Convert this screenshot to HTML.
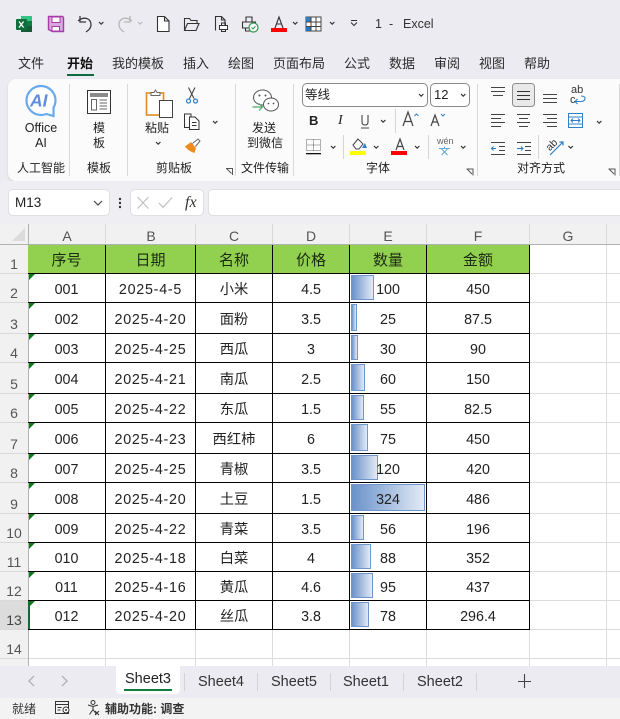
<!DOCTYPE html>
<html lang="zh"><head><meta charset="utf-8"><title>Excel</title>
<style>
*{box-sizing:border-box}
html,body{margin:0;padding:0}
body{width:620px;height:719px;overflow:hidden;position:relative;background:#ecebf1;font-family:"Liberation Sans","Noto Sans CJK SC",sans-serif;color:#1f1f1f}
.a{position:absolute}
.t{position:absolute;white-space:nowrap;line-height:16px;font-size:12px;color:#222}
.c{transform:translateX(-50%);text-align:center}
svg{position:absolute;overflow:visible;fill:none}
.tab{font-size:13px;top:56px;color:#2b2b2b}
.v{position:absolute;top:84px;width:1px;height:92px;background:#d8d8d8}
.vs{position:absolute;width:1px;background:#d3d3d3}
.rh{position:absolute;left:0;width:28px;text-align:center;font-size:14px;line-height:16px;color:#555}
.ch{position:absolute;top:228px;font-size:14px;line-height:16px;color:#555;transform:translateX(-50%)}
.hl{position:absolute;left:0;width:28px;height:1px;background:#d9d9d9}
.hv{position:absolute;top:224px;height:20px;width:1px;background:#d9d9d9}
table{position:absolute;left:28px;top:245px;border-collapse:separate;border-spacing:0;table-layout:fixed;width:502px}
td{padding:4px 0 0;border-right:1px solid #000;border-bottom:1px solid #000;text-align:center;font-size:14.3px;color:#222;position:relative;white-space:nowrap;overflow:visible;line-height:16px}
tr.h td{background:#92d050;font-size:15px;color:#1c2a10}
.g{position:absolute;left:1px;top:0;width:0;height:0;border-top:6px solid #0a7a16;border-right:6px solid transparent}
.b{position:absolute;left:1px;top:1px;bottom:2px;border:1px solid #7097cc;background:linear-gradient(90deg,#6a92ca,#e2eaf5)}
.n{position:relative}
.d{letter-spacing:.75px}
.sn{position:absolute;top:674px;font-size:14.5px;line-height:17px;color:#333;white-space:nowrap;transform:translateX(-50%)}
.gl{position:absolute;background:#dcdcdc}
</style></head><body>

<!-- title bar icons -->
<svg style="left:0;top:0" width="400" height="50" viewBox="0 0 400 50">
<path d="M21 16h11v16h-11z" fill="#107c41"/><path d="M21 16h11v5h-11z" fill="#33c481"/><path d="M21 26h11v6h-11z" fill="#185c37"/><rect x="16" y="19" width="11" height="11" rx="1" fill="#0f6f3c"/>
<path d="M19 21.5l4.6 6M23.6 21.500l-4.600 6" stroke="#fff" stroke-width="1.300"/>
<path d="M48.500 16.500h14l1 1v14h-11l-4-2z" fill="#d9a8dc" stroke="#a93aa8" stroke-width="1.400"/>
<rect x="52" y="17" width="8" height="5.500" fill="#fff" stroke="#a93aa8"/><rect x="52" y="26.500" width="7.500" height="4.500" fill="#fff" stroke="#a93aa8"/>
<path d="M80 16v6h6M78 21c6-5 13-3 13 4 0 3-2 5-5 7" stroke="#3a3a3a" stroke-width="1.300"/>
<path d="M99 22l2.200 2.200 2.200-2.200" stroke="#333" stroke-width="1.200"/>
<path d="M130 16v6h-6M132 21c-6-5-13-3-13 4 0 3 2 5 5 7" stroke="#b5b5b5" stroke-width="1.300"/>
<path d="M138 22l2.200 2.200 2.200-2.200" stroke="#bbb" stroke-width="1.200"/>
<path d="M157.500 16.500h7l4.500 4.500v10.500h-11.500zM164.500 16.500v4.500h4.500" stroke="#333" stroke-width="1.100" fill="#fff"/>
<path d="M184.500 30.500v-12h5l1.500 2h6v3M184.500 30.500h11.500l3-7h-11.500z" stroke="#333" stroke-width="1.100"/>
<path d="M215.500 30.500v-14h6l3.500 3.500v5M221.500 16.500v3.500h3.500" stroke="#333" stroke-width="1.100"/><rect x="219.500" y="25.500" width="8" height="4" fill="#fff" stroke="#333"/><rect x="221.500" y="23" width="4" height="2.500" stroke="#333"/><rect x="221.500" y="29.500" width="4" height="2" stroke="#333"/>
<path d="M246 17h6v5h-6zM242.500 22h13v6h-13zM245.500 28h6v3h-6z" stroke="#333" stroke-width="1.100"/>
<circle cx="253.500" cy="27.500" r="4.500" fill="#fff" stroke="#3a9a5a" stroke-width="1.300"/><path d="M251.500 27.500l1.500 1.500 2.500-2.800" stroke="#3a9a5a" stroke-width="1.100"/>
<path d="M275 28l4-11 4 11M276.500 24h5" stroke="#333" stroke-width="1.100"/><rect x="271" y="28" width="16" height="4" fill="#f00"/>
<path d="M293 22l2.200 2.200 2.200-2.200" stroke="#333" stroke-width="1.200"/>
<rect x="306" y="17" width="15" height="14" fill="#fff" stroke="#444"/><rect x="306" y="17" width="5" height="5" fill="#2f80c8"/><rect x="306" y="26" width="5" height="5" fill="#1f78c8"/><path d="M311 17v14M316 17v14M306 22h15M306 26.500h15" stroke="#444"/>
<path d="M330 22l2.200 2.200 2.200-2.200" stroke="#333" stroke-width="1.200"/>
<path d="M351 20.500h6M351 22.500l3 3 3-3" stroke="#333" stroke-width="1"/>
</svg>
<div class="t" style="left:375px;top:16px;font-size:12.500px;color:#333">1</div>
<div class="t" style="left:389px;top:16px;font-size:12.500px;color:#333">-</div>
<div class="t" style="left:403px;top:16px;font-size:12.500px;color:#333">Excel</div>

<!-- tabs -->
<div class="t tab" style="left:18px">文件</div>
<div class="t tab" style="left:67px;font-weight:700;color:#111">开始</div>
<div class="a" style="left:67px;top:74px;width:27px;height:2px;background:#0f6b3b"></div>
<div class="t tab" style="left:112px">我的模板</div>
<div class="t tab" style="left:183px">插入</div>
<div class="t tab" style="left:228px">绘图</div>
<div class="t tab" style="left:273px">页面布局</div>
<div class="t tab" style="left:344px">公式</div>
<div class="t tab" style="left:389px">数据</div>
<div class="t tab" style="left:434px">审阅</div>
<div class="t tab" style="left:479px">视图</div>
<div class="t tab" style="left:524px">帮助</div>

<!-- ribbon -->
<div class="a" style="left:8px;top:79px;width:620px;height:102px;background:#fbfbfb;border-radius:8px;box-shadow:0 1px 2px #cfcfd4"></div>
<div class="v" style="left:69px"></div><div class="v" style="left:127px"></div><div class="v" style="left:235px"></div><div class="v" style="left:293px"></div><div class="v" style="left:477px"></div><div class="v" style="left:619px"></div>

<svg style="left:0;top:0" width="620" height="182" viewBox="0 0 620 182">
<!-- AI -->
<path d="M41 86c7.500 0 14.500 6 14.500 14.500 0 2.500-.7 5-2 7v8.500l-7-2c-1.700.6-3.500 1-5.500 1-8 0-14.500-6.500-14.500-14.500s6.500-14.500 14.500-14.500z" stroke="#6aa9ee" stroke-width="2.200" fill="#fff"/>
<text x="30" y="106.500" font-family="Liberation Sans" font-style="italic" font-weight="700" font-size="17.500" fill="#5f8fdc">AI</text>
<!-- template -->
<rect x="87.500" y="90.500" width="23" height="23" stroke="#333" fill="#fff"/><rect x="90" y="93" width="18" height="4" fill="#8a8a8a"/><rect x="91.500" y="99.500" width="5" height="10.500" stroke="#666"/><path d="M99.500 100h7.500M99.500 103h7.500M99.500 106h7.500M99.500 109h7.500" stroke="#666"/>
<!-- paste -->
<rect x="146.500" y="93" width="17" height="22" stroke="#e08a24" stroke-width="1.600" fill="#fff"/>
<path d="M151 92.500h3l1.500-2.500 1.500 2.500h3v3h-9z" stroke="#666" fill="#fff"/>
<rect x="159.500" y="100.500" width="13" height="17" fill="#fff" stroke="#444"/>
<!-- scissors -->
<path d="M188.500 87.500l5.500 11M195 87.500l-5.500 11" stroke="#444" stroke-width="1.100"/><circle cx="188.500" cy="101" r="2" stroke="#2f80c8" stroke-width="1.200"/><circle cx="195.500" cy="101" r="2" stroke="#2f80c8" stroke-width="1.200"/>
<!-- copy -->
<path d="M189 127.500h-4.500v-13.500h6.500v3" stroke="#333"/><path d="M189.500 117h5.500l4 4v8.500h-9.500zM192 122.500h4.500M192 125.500h4.500" stroke="#333"/>
<path d="M213 121l2.200 2.200 2.200-2.200" stroke="#333" stroke-width="1.200"/>
<path d="M156 142l2.200 2.200 2.200-2.200" stroke="#333" stroke-width="1.200"/>
<!-- brush -->
<path d="M185 146.500l6-4.500 5 6-1.500 5c-3.500-1-7.500-3.500-9.500-6.500z" fill="#ee8a1e"/><path d="M192.500 143.500l5.500-4.500 2 2-4.500 5.500" stroke="#666" fill="#fff"/>
<path d="M226 168.500h6.500v6.500M226.500 168.500l5 5" stroke="#555"/>
<!-- wechat -->
<ellipse cx="262.500" cy="97.500" rx="9" ry="7.500" stroke="#555" fill="#fff"/><circle cx="259.500" cy="95.500" r="1" fill="#555"/><circle cx="265.500" cy="95.500" r="1" fill="#555"/>
<ellipse cx="271" cy="104.500" rx="7.500" ry="6.500" stroke="#555" fill="#fff"/><circle cx="268.500" cy="103.500" r=".9" fill="#555"/><circle cx="273.500" cy="103.500" r=".9" fill="#555"/>
<path d="M252.500 107h10M259 103.500l3.500 3.500-3.500 3.500" stroke="#4aa86a" stroke-width="1.200"/>
<!-- font row 2 -->
<path d="M362 115v7c0 2 1 3 3 3s3-1 3-3v-7M361 128h8" stroke="#444" stroke-width="1.100"/>
<path d="M381 120l2.200 2.200 2.200-2.200" stroke="#333" stroke-width="1.200"/>
<rect x="395" y="109" width="1" height="24" fill="#d5d5d5"/>
<path d="M403 126l5-14 5 14M405 121.500h6" stroke="#444" stroke-width="1.200"/><path d="M414.500 116l2-2 2 2" stroke="#2f80c8" stroke-width="1"/>
<path d="M431 126l4-11 4 11M432.500 122h5" stroke="#444" stroke-width="1.200"/><path d="M441 114l2 2 2-2" stroke="#2f80c8" stroke-width="1"/>
<!-- font row 3 -->
<path d="M306.500 139.500h14v11h-14zM306.500 145h14M313.500 139.500v11" stroke="#666" stroke-dasharray="1 1"/><rect x="306" y="153" width="15" height="1.300" fill="#111"/>
<path d="M331 146l2.200 2.200 2.200-2.200" stroke="#333" stroke-width="1.200"/>
<rect x="343" y="135" width="1" height="24" fill="#d5d5d5"/>
<path d="M353 145l5-6 5 5-4 5h-3z" stroke="#444"/><path d="M362 148l3-5 2 5z" fill="#2f80c8"/><rect x="350" y="151" width="16" height="4" fill="#ff0"/>
<path d="M374 146l2.200 2.200 2.200-2.200" stroke="#333" stroke-width="1.200"/>
<path d="M396 150l4-11 4 11M397.500 146.500h5" stroke="#444" stroke-width="1.200"/><rect x="391" y="151" width="16" height="4" fill="#f00"/>
<path d="M415 146l2.200 2.200 2.200-2.200" stroke="#333" stroke-width="1.200"/>
<rect x="428" y="135" width="1" height="24" fill="#d5d5d5"/>
<path d="M439 148.500h11M444.500 146.500v2M441.500 149l6 6M447.500 149l-6 6" stroke="#5fa8d8"/>
<path d="M461 146l2.200 2.200 2.200-2.200" stroke="#333" stroke-width="1.200"/>
<path d="M466.500 169h6.500v6.500M467 169l5 5" stroke="#555"/>
<!-- align top -->
<path d="M491 87.500h14M491 91.500h14M493 95.500h10" stroke="#444"/>
<rect x="512.500" y="83.500" width="22" height="23" rx="3" fill="#e9e9e9" stroke="#8e8e8e"/>
<path d="M517 91.500h13M517 95.500h13M517 99.500h13" stroke="#333"/>
<path d="M543 94.500h14M543 98.500h14M543 102.500h14" stroke="#444"/>
<path d="M581 96c3 0 4 1 4 2.500s-1.500 3-4 3h-6M577.500 99l-2.500 2.500 2.500 2.500" stroke="#2f80c8" stroke-width="1.100"/>
<text x="571" y="93" font-family="Liberation Sans" font-size="11" fill="#333">ab</text><text x="570" y="103" font-family="Liberation Sans" font-size="11" fill="#333">c</text>
<!-- align row 2 -->
<path d="M491 114.500h14M491 118.500h10M491 122.500h14M491 126.500h10" stroke="#444"/>
<path d="M517 114.500h13M519 118.500h9M517 122.500h13M519 126.500h9" stroke="#444"/>
<path d="M543 114.500h14M547 118.500h10M543 122.500h14M547 126.500h10" stroke="#444"/>
<rect x="568.500" y="113.500" width="14" height="14" stroke="#2f80c8" fill="#fff"/><path d="M568.500 117h14M568.500 124h14" stroke="#2f80c8"/><path d="M571 120.500h9M573 118.500l-2 2 2 2M578 118.500l2 2-2 2" stroke="#2f80c8"/>
<path d="M597 121l2.200 2.200 2.200-2.200" stroke="#333" stroke-width="1.200"/>
<!-- align row 3 -->
<path d="M491 142.500h14M499 146.500h6M499 150.500h6M491 154.500h14" stroke="#444"/><path d="M496 148.500h-5M493.500 146.500l-2 2 2 2" stroke="#2f80c8"/>
<path d="M517 142.500h14M525 146.500h6M525 150.500h6M517 154.500h14" stroke="#444"/><path d="M517 148.500h6M521 146.500l2 2-2 2" stroke="#2f80c8"/>
<rect x="538" y="135" width="1" height="24" fill="#d5d5d5"/>
<path d="M550 155l13-13M559.500 142h3.500v3.500" stroke="#2f80c8" stroke-width="1.200"/>
<text x="546" y="148" font-family="Liberation Sans" font-size="10.500" fill="#333" transform="rotate(-45 552 145)">ab</text>
<path d="M568.500 146l2.200 2.200 2.200-2.200" stroke="#333" stroke-width="1.200"/>
<path d="M608.500 169h6.500v6.500M609 169l5 5" stroke="#555"/>
</svg>

<div class="t c" style="left:41px;top:120px;font-size:12.500px">Office</div>
<div class="t c" style="left:41px;top:135px;font-size:12.500px">AI</div>
<div class="t c" style="left:99px;top:120px">模</div>
<div class="t c" style="left:99px;top:135px">板</div>
<div class="t c" style="left:157px;top:120px">粘贴</div>
<div class="t c" style="left:264px;top:120px">发送</div>
<div class="t c" style="left:265px;top:135px">到微信</div>
<div class="t c" style="left:41px;top:160px">人工智能</div>
<div class="t c" style="left:99px;top:160px">模板</div>
<div class="t c" style="left:174px;top:160px">剪贴板</div>
<div class="t c" style="left:265px;top:160px">文件传输</div>
<div class="t c" style="left:378px;top:160px">字体</div>
<div class="t c" style="left:541px;top:160px">对齐方式</div>

<!-- font controls -->
<div class="a" style="left:302px;top:83px;width:126px;height:24px;border:1px solid #8a8a8a;border-radius:5px;background:#fff"></div>
<div class="t" style="left:305px;top:87px;font-size:12.500px;color:#222">等线</div>
<div class="a" style="left:430px;top:83px;width:40px;height:24px;border:1px solid #8a8a8a;border-radius:5px;background:#fff"></div>
<div class="t" style="left:434px;top:87px;font-size:13px">12</div>
<svg style="left:0;top:0" width="620" height="120"><path d="M419 94l2.200 2.200 2.200-2.200M461 94l2.200 2.200 2.200-2.200" stroke="#333" stroke-width="1.200"/></svg>
<div class="t" style="left:309px;top:113px;font-weight:700;font-size:13px">B</div>
<div class="t" style="left:338px;top:113px;font-family:'Liberation Serif',serif;font-style:italic;font-size:14px">I</div>
<div class="t" style="left:437px;top:136px;font-size:9px;line-height:10px;color:#666">wén</div>

<!-- formula bar -->
<div class="a" style="left:0;top:181px;width:620px;height:43px;background:#eeeef3"></div>
<div class="a" style="left:8px;top:189px;width:102px;height:27px;background:#fff;border:1px solid #dedee3;border-radius:5px"></div>
<div class="t" style="left:15px;top:195px;font-size:13.500px;color:#222">M13</div>
<div class="a" style="left:130px;top:189px;width:74px;height:27px;background:#fff;border:1px solid #dedee3;border-radius:5px"></div>
<div class="a" style="left:208px;top:189px;width:420px;height:27px;background:#fff;border:1px solid #dedee3;border-radius:5px"></div>
<svg style="left:0;top:0" width="210" height="220"><path d="M94 201l4 4 4-4" stroke="#444" stroke-width="1.200"/><circle cx="120" cy="199" r="1.200" fill="#333"/><circle cx="120" cy="203" r="1.200" fill="#333"/><circle cx="120" cy="207" r="1.200" fill="#333"/><path d="M137.500 197l11 11.500M148.500 197l-11 11.500M159 203l4 4.500 9-10" stroke="#c0c0c0" stroke-width="1.200"/></svg>
<div class="t" style="left:185px;top:195px;font-family:'Liberation Serif',serif;font-style:italic;font-size:16px;color:#333">fx</div>

<!-- grid bg -->
<div class="a" style="left:0;top:224px;width:620px;height:442px;background:#fff"></div>
<div class="a" style="left:0;top:224px;width:620px;height:20px;background:#f1f1f1"></div>
<div class="a" style="left:0;top:244px;width:28px;height:422px;background:#f1f1f1"></div>
<div class="a" style="left:0;top:244px;width:620px;height:1px;background:#b2b2b2"></div>
<div class="a" style="left:28px;top:224px;width:1px;height:442px;background:#b2b2b2"></div>
<svg style="left:0;top:0" width="30" height="245"><path d="M25 228v13h-13z" fill="#dcdcdc"/></svg>
<div class="hv" style="left:105px"></div><div class="hv" style="left:195px"></div><div class="hv" style="left:272px"></div><div class="hv" style="left:349px"></div><div class="hv" style="left:426px"></div><div class="hv" style="left:529px"></div><div class="hv" style="left:606px"></div>
<div class="ch" style="left:67px">A</div><div class="ch" style="left:151px">B</div><div class="ch" style="left:234px">C</div><div class="ch" style="left:311px">D</div><div class="ch" style="left:388px">E</div><div class="ch" style="left:478px">F</div><div class="ch" style="left:568px">G</div>

<!-- outer gridlines -->
<div class="gl" style="left:606px;top:245px;width:1px;height:421px"></div>
<div class="gl" style="left:29px;top:658px;width:591px;height:1px"></div>
<div class="gl" style="left:105px;top:630px;width:1px;height:36px"></div><div class="gl" style="left:195px;top:630px;width:1px;height:36px"></div><div class="gl" style="left:272px;top:630px;width:1px;height:36px"></div><div class="gl" style="left:349px;top:630px;width:1px;height:36px"></div><div class="gl" style="left:426px;top:630px;width:1px;height:36px"></div><div class="gl" style="left:529px;top:630px;width:1px;height:36px"></div>
<div class="gl" style="left:530px;top:273px;width:90px;height:1px"></div><div class="gl" style="left:530px;top:302px;width:90px;height:1px"></div><div class="gl" style="left:530px;top:333px;width:90px;height:1px"></div><div class="gl" style="left:530px;top:362px;width:90px;height:1px"></div><div class="gl" style="left:530px;top:393px;width:90px;height:1px"></div><div class="gl" style="left:530px;top:422px;width:90px;height:1px"></div><div class="gl" style="left:530px;top:453px;width:90px;height:1px"></div><div class="gl" style="left:530px;top:482px;width:90px;height:1px"></div><div class="gl" style="left:530px;top:513px;width:90px;height:1px"></div><div class="gl" style="left:530px;top:542px;width:90px;height:1px"></div><div class="gl" style="left:530px;top:571px;width:90px;height:1px"></div><div class="gl" style="left:530px;top:600px;width:90px;height:1px"></div><div class="gl" style="left:530px;top:629px;width:90px;height:1px"></div>

<!-- row headers -->
<div class="hl" style="top:273px"></div><div class="hl" style="top:302px"></div><div class="hl" style="top:333px"></div><div class="hl" style="top:362px"></div><div class="hl" style="top:393px"></div><div class="hl" style="top:422px"></div><div class="hl" style="top:453px"></div><div class="hl" style="top:482px"></div><div class="hl" style="top:513px"></div><div class="hl" style="top:542px"></div><div class="hl" style="top:571px"></div><div class="hl" style="top:600px"></div><div class="hl" style="top:629px"></div><div class="hl" style="top:658px"></div>
<div class="a" style="left:0;top:601px;width:28px;height:28px;background:#dcdcdc"></div>
<div class="a" style="left:28px;top:601px;width:2px;height:29px;background:#0f6b3b"></div>
<div class="rh" style="top:256px">1</div><div class="rh" style="top:285px">2</div><div class="rh" style="top:316px">3</div><div class="rh" style="top:345px">4</div><div class="rh" style="top:376px">5</div><div class="rh" style="top:405px">6</div><div class="rh" style="top:436px">7</div><div class="rh" style="top:465px">8</div><div class="rh" style="top:496px">9</div><div class="rh" style="top:525px">10</div><div class="rh" style="top:554px">11</div><div class="rh" style="top:583px">12</div><div class="rh" style="top:612px;color:#444">13</div><div class="rh" style="top:641px">14</div>

<table>
<colgroup><col style="width:78px"><col style="width:90px"><col style="width:77px"><col style="width:77px"><col style="width:77px"><col style="width:103px"></colgroup>
<tr class="h" style="height:29px"><td>序号</td><td>日期</td><td>名称</td><td>价格</td><td>数量</td><td>金额</td></tr>
<tr style="height:29px"><td><i class="g"></i>001</td><td class="d">2025-4-5</td><td>小米</td><td>4.5</td><td><i class="b" style="width:23px"></i><span class="n">100</span></td><td>450</td></tr>
<tr style="height:31px"><td><i class="g"></i>002</td><td class="d">2025-4-20</td><td>面粉</td><td>3.5</td><td><i class="b" style="width:6px"></i><span class="n">25</span></td><td>87.5</td></tr>
<tr style="height:29px"><td><i class="g"></i>003</td><td class="d">2025-4-25</td><td>西瓜</td><td>3</td><td><i class="b" style="width:7px"></i><span class="n">30</span></td><td>90</td></tr>
<tr style="height:31px"><td><i class="g"></i>004</td><td class="d">2025-4-21</td><td>南瓜</td><td>2.5</td><td><i class="b" style="width:14px"></i><span class="n">60</span></td><td>150</td></tr>
<tr style="height:29px"><td><i class="g"></i>005</td><td class="d">2025-4-22</td><td>东瓜</td><td>1.5</td><td><i class="b" style="width:13px"></i><span class="n">55</span></td><td>82.5</td></tr>
<tr style="height:31px"><td><i class="g"></i>006</td><td class="d">2025-4-23</td><td>西红柿</td><td>6</td><td><i class="b" style="width:17px"></i><span class="n">75</span></td><td>450</td></tr>
<tr style="height:29px"><td><i class="g"></i>007</td><td class="d">2025-4-25</td><td>青椒</td><td>3.5</td><td><i class="b" style="width:27px"></i><span class="n">120</span></td><td>420</td></tr>
<tr style="height:31px"><td><i class="g"></i>008</td><td class="d">2025-4-20</td><td>土豆</td><td>1.5</td><td><i class="b" style="width:74px"></i><span class="n">324</span></td><td>486</td></tr>
<tr style="height:29px"><td><i class="g"></i>009</td><td class="d">2025-4-22</td><td>青菜</td><td>3.5</td><td><i class="b" style="width:13px"></i><span class="n">56</span></td><td>196</td></tr>
<tr style="height:29px"><td><i class="g"></i>010</td><td class="d">2025-4-18</td><td>白菜</td><td>4</td><td><i class="b" style="width:20px"></i><span class="n">88</span></td><td>352</td></tr>
<tr style="height:29px"><td><i class="g"></i>011</td><td class="d">2025-4-16</td><td>黄瓜</td><td>4.6</td><td><i class="b" style="width:22px"></i><span class="n">95</span></td><td>437</td></tr>
<tr style="height:29px"><td><i class="g"></i>012</td><td class="d">2025-4-20</td><td>丝瓜</td><td>3.8</td><td><i class="b" style="width:18px"></i><span class="n">78</span></td><td>296.4</td></tr>
</table>

<!-- sheet tabs -->
<div class="a" style="left:0;top:666px;width:620px;height:32px;background:#ebebf1"></div>
<svg style="left:0;top:660px" width="70" height="40"><path d="M34 16l-5 5 5 5" stroke="#aaa" stroke-width="1.200"/><path d="M62 16l5 5-5 5" stroke="#aaa" stroke-width="1.200"/></svg>
<div class="a" style="left:116px;top:666px;width:64px;height:28px;background:#fff;border-radius:0 0 5px 5px"></div>
<div class="a" style="left:124px;top:689px;width:48px;height:2px;background:#107c41"></div>
<div class="sn" style="left:148px;top:671px;color:#222">Sheet3</div>
<div class="sn" style="left:221px">Sheet4</div><div class="sn" style="left:294px">Sheet5</div><div class="sn" style="left:366px">Sheet1</div><div class="sn" style="left:440px">Sheet2</div>
<div class="vs" style="left:184px;top:673px;height:18px"></div><div class="vs" style="left:257px;top:673px;height:18px"></div><div class="vs" style="left:330px;top:673px;height:18px"></div><div class="vs" style="left:403px;top:673px;height:18px"></div><div class="vs" style="left:476px;top:673px;height:18px"></div>
<svg style="left:510px;top:671px" width="30" height="24"><path d="M14.500 3v14M8 10.500h13" stroke="#444" stroke-width="1.100"/></svg>

<!-- status -->
<div class="a" style="left:0;top:698px;width:620px;height:21px;background:#f3f3f3"></div>
<div class="t" style="left:12px;top:701px;color:#333">就绪</div>
<svg style="left:0;top:695px" width="110" height="24"><rect x="55.500" y="6.500" width="13" height="12" stroke="#333"/><path d="M55.500 9.500h13M57.500 12.500h4M57.500 15h3" stroke="#333"/><circle cx="66" cy="15" r="3" fill="#fff" stroke="#333"/><circle cx="66" cy="15" r="1" fill="#333"/><circle cx="93" cy="7.500" r="2" stroke="#333"/><path d="M88 10l5 1.500 5-1.500M93 11.500v3l-3.500 5M93 14.500l3.500 5" stroke="#333"/><path d="M95 16l4 4M99 16l-4 4" stroke="#333"/></svg>
<div class="t" style="left:105px;top:701px;font-weight:700;font-size:12px;color:#333">辅助功能: 调查</div>
</body></html>
